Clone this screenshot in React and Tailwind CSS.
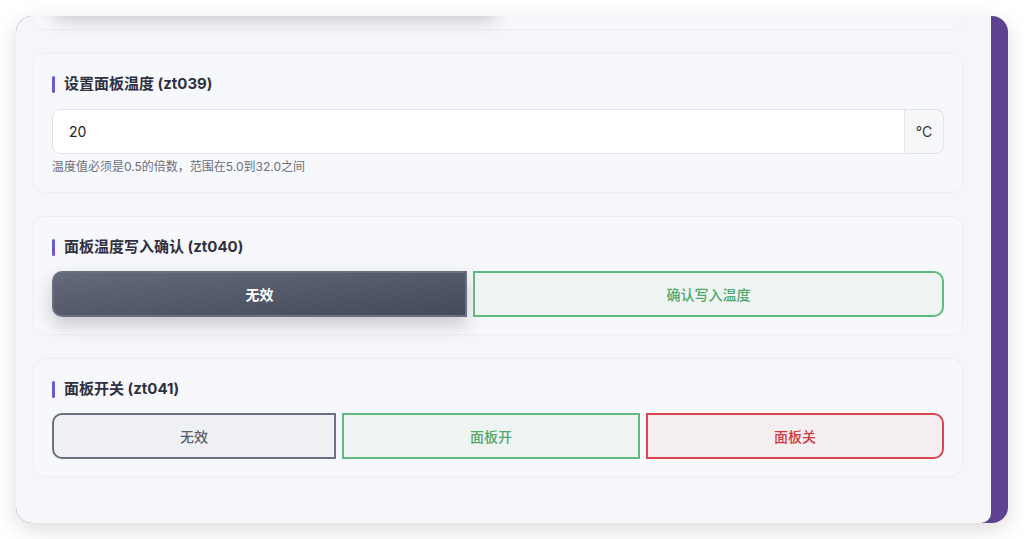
import React from "react";

const FONT = { fontFamily: 'Inter, "Noto Sans CJK SC", "Noto Sans", sans-serif' };

function Title({ children, mb = "mb-[14px]" }) {
  return (
    <div className={`flex items-center h-5 ${mb}`}>
      <span className="w-[3px] h-[17px] rounded-full bg-gradient-to-b from-[#5b5fd8] to-[#7b4fc8] mr-[9px]" />
      <span className="text-[15px] leading-5 font-bold text-[#2f3140]">{children}</span>
    </div>
  );
}

const styles = {
  dark: "bg-gradient-to-br from-[#646a7b] to-[#444a59] border-[#6a6f7e] text-white font-semibold shadow-[0_8px_18px_rgba(30,35,50,0.22)]",
  gray: "bg-[#eff0f4] border-[#6b7080] text-[#5b6070] font-medium",
  green: "bg-[#eef4f2] border-[#62b97f] text-[#52a86f] font-medium",
  red: "bg-[#f5eef1] border-[#d8474f] text-[#d03a44] font-medium",
};

function Btn({ kind, pos, children }) {
  const r = pos === "first" ? "rounded-l-[10px]" : pos === "last" ? "rounded-r-[10px]" : "";
  return (
    <button className={`flex-auto h-[46px] px-4 border-2 text-[14px] ${r} ${styles[kind]}`}>
      {children}
    </button>
  );
}

function Card({ children, className = "" }) {
  return (
    <div className={`bg-[#f7f8fb] border border-[#eceef3] rounded-xl px-[18px] pt-5 pb-[17px] ${className}`}>
      {children}
    </div>
  );
}

export default function App() {
  return (
    <div className="w-[1024px] h-[539px] bg-white pt-4 pl-4" style={FONT}>
      <div className="w-[992px] h-[507px] rounded-2xl overflow-hidden bg-[#5e4291] flex shadow-[0_6px_22px_rgba(0,0,0,0.14)]">
        <div className="w-[975px] h-full bg-[#f5f5fa] rounded-br-[10px] overflow-hidden pl-[17px] pr-[28px] flex flex-col gap-[23px]">
          <Card className="-mt-[105px]">
            <div className="h-5 mb-[14px]" />
            <div className="flex gap-1.5">
              <Btn kind="dark" pos="first"></Btn>
              <Btn kind="green" pos="last"></Btn>
            </div>
          </Card>

          <Card>
            <Title mb="mb-[15px]">设置面板温度 (zt039)</Title>
            <div className="flex h-[45px]">
              <input
                readOnly
                value="20"
                className="flex-1 min-w-0 bg-white border border-[#e1e3ea] rounded-l-lg px-4 text-[14px] text-[#222] outline-none"
                style={FONT}
              />
              <div className="w-[39px] flex items-center justify-center bg-[#f6f7f9] border border-l-0 border-[#e1e3ea] rounded-r-lg text-[14px] text-[#333]">
                °C
              </div>
            </div>
            <div className="mt-1 text-[12px] leading-[17px] text-[#6b6f7b]">
              温度值必须是0.5的倍数，范围在5.0到32.0之间
            </div>
          </Card>

          <Card>
            <Title>面板温度写入确认 (zt040)</Title>
            <div className="flex gap-1.5">
              <Btn kind="dark" pos="first">无效</Btn>
              <Btn kind="green" pos="last">确认写入温度</Btn>
            </div>
          </Card>

          <Card>
            <Title>面板开关 (zt041)</Title>
            <div className="flex gap-1.5">
              <Btn kind="gray" pos="first">无效</Btn>
              <Btn kind="green" pos="mid">面板开</Btn>
              <Btn kind="red" pos="last">面板关</Btn>
            </div>
          </Card>
        </div>
        <div className="flex-1" />
      </div>
    </div>
  );
}
